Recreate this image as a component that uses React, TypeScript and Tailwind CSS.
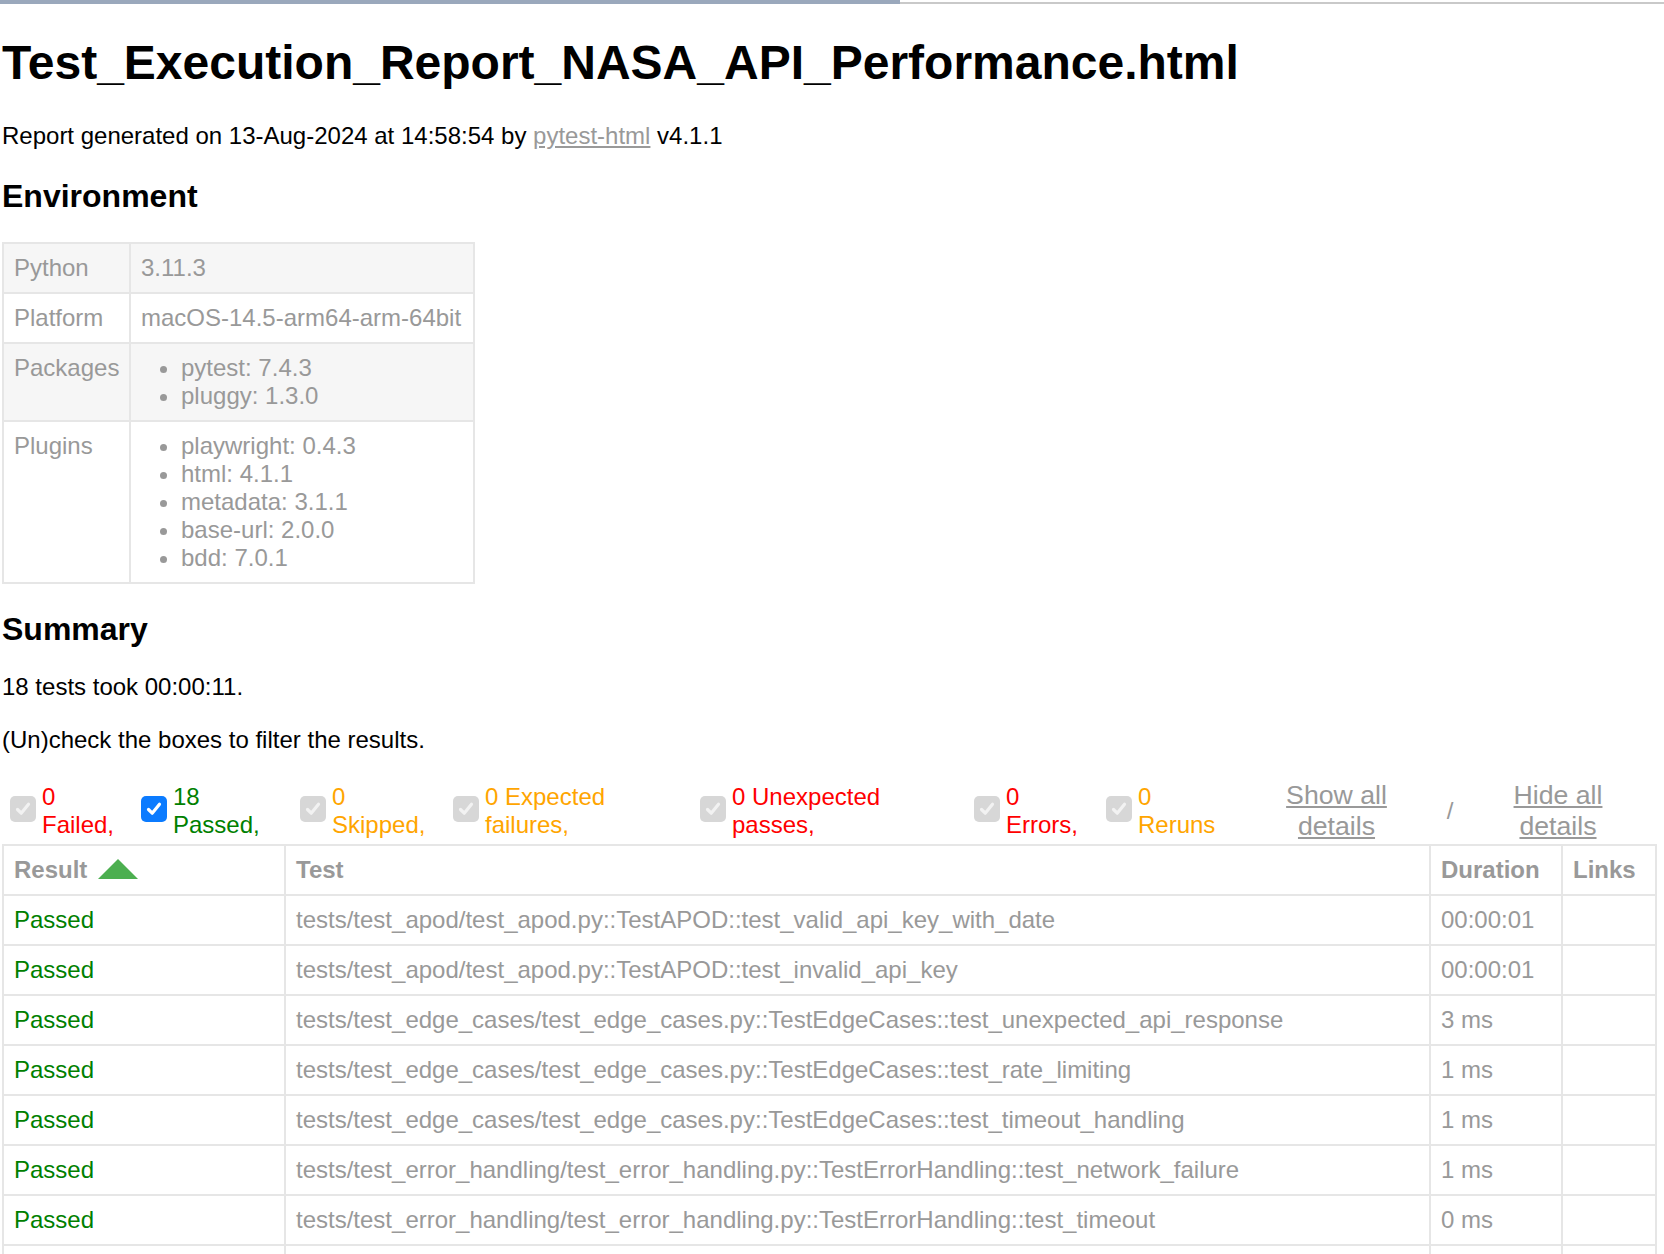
import React from "react";

function Check({ on }: { on?: boolean }) {
  return (
    <span
      className={
        on
          ? "mb-[4px] ml-[8px] mr-[6px] flex h-[26px] w-[26px] shrink-0 items-center justify-center rounded-[5px] bg-[#0b7bff]"
          : "mb-[4px] ml-[8px] mr-[6px] flex h-[26px] w-[26px] shrink-0 items-center justify-center rounded-[5px] bg-[#d7d7d7]"
      }
    >
      <svg width="20" height="20" viewBox="0 0 20 20">
        <path
          d="M4.5 10.5 L8.2 14.2 L15.5 5.2"
          fill="none"
          stroke={on ? "#ffffff" : "#f2f2f2"}
          strokeWidth="3.2"
          strokeLinecap="round"
          strokeLinejoin="round"
        />
      </svg>
    </span>
  );
}

const filters = [
  { on: false, l1: "0", l2: "Failed,", cls: "w-[91px] text-[#ff0000]" },
  { on: true, l1: "18", l2: "Passed,", cls: "w-[119px] text-[#008000]" },
  { on: false, l1: "0", l2: "Skipped,", cls: "w-[113px] text-[#ffa500]" },
  { on: false, l1: "0 Expected", l2: "failures,", cls: "w-[207px] text-[#ffa500]" },
  { on: false, l1: "0 Unexpected", l2: "passes,", cls: "w-[234px] text-[#ff0000]" },
  { on: false, l1: "0", l2: "Errors,", cls: "w-[92px] text-[#ff0000]" },
  { on: false, l1: "0", l2: "Reruns", cls: "w-[95px] text-[#ffa500]" },
];

const rows = [
  ["tests/test_apod/test_apod.py::TestAPOD::test_valid_api_key_with_date", "00:00:01"],
  ["tests/test_apod/test_apod.py::TestAPOD::test_invalid_api_key", "00:00:01"],
  ["tests/test_edge_cases/test_edge_cases.py::TestEdgeCases::test_unexpected_api_response", "3 ms"],
  ["tests/test_edge_cases/test_edge_cases.py::TestEdgeCases::test_rate_limiting", "1 ms"],
  ["tests/test_edge_cases/test_edge_cases.py::TestEdgeCases::test_timeout_handling", "1 ms"],
  ["tests/test_error_handling/test_error_handling.py::TestErrorHandling::test_network_failure", "1 ms"],
  ["tests/test_error_handling/test_error_handling.py::TestErrorHandling::test_timeout", "0 ms"],
];

const envTd = "border-[2px] border-[#e6e6e6] p-[10px] align-top";
const resCell = "border-[2px] border-[#e6e6e6] p-[10px] text-left align-top";

export default function App() {
  return (
    <div className="relative h-[1254px] w-[1664px] overflow-hidden bg-white font-['Liberation_Sans',Arial,Helvetica,sans-serif] text-[24px] leading-[27.6px] text-[#999999]">
      <div className="flex h-[4px]">
        <div className="h-[4px] w-[900px] bg-[#9aa8bc]" />
        <div className="mt-[2px] h-[2px] flex-1 bg-[#c9c9c9]" />
      </div>
      <div className="pl-[2px]">
        <h1 className="mt-[31px] text-[48px] font-bold leading-[55.2px] text-black">
          Test_Execution_Report_NASA_API_Performance.html
        </h1>
        <p className="mt-[32px] text-black">
          Report generated on 13-Aug-2024 at 14:58:54 by{" "}
          <a className="text-[#999999] underline">pytest-html</a> v4.1.1
        </p>
        <h2 className="mt-[28px] text-[32px] font-bold leading-[36.8px] text-black">Environment</h2>
        <table className="mt-[27px] w-[471px] table-fixed border-collapse leading-[28px]">
          <colgroup>
            <col className="w-[127px]" />
            <col className="w-[344px]" />
          </colgroup>
          <tbody>
            <tr className="bg-[#f6f6f6]">
              <td className={envTd}>Python</td>
              <td className={envTd}>3.11.3</td>
            </tr>
            <tr>
              <td className={envTd}>Platform</td>
              <td className={envTd + " whitespace-nowrap"}>macOS-14.5-arm64-arm-64bit</td>
            </tr>
            <tr className="bg-[#f6f6f6]">
              <td className={envTd}>Packages</td>
              <td className={envTd}>
                <ul className="list-disc pl-[40px]">
                  <li>pytest: 7.4.3</li>
                  <li>pluggy: 1.3.0</li>
                </ul>
              </td>
            </tr>
            <tr>
              <td className={envTd}>Plugins</td>
              <td className={envTd}>
                <ul className="list-disc pl-[40px]">
                  <li>playwright: 0.4.3</li>
                  <li>html: 4.1.1</li>
                  <li>metadata: 3.1.1</li>
                  <li>base-url: 2.0.0</li>
                  <li>bdd: 7.0.1</li>
                </ul>
              </td>
            </tr>
          </tbody>
        </table>

        <h2 className="mt-[27px] text-[32px] font-bold leading-[36.8px] text-black">Summary</h2>
        <p className="mt-[26px] text-black">18 tests took 00:00:11.</p>
        <p className="mt-[25px] text-black">(Un)check the boxes to filter the results.</p>

        <div className="mt-[25px] flex h-[65px] items-center">
          <div className="flex h-full items-center">
            {filters.map((f, i) => (
              <div key={i} className="flex items-center">
                <Check on={f.on} />
                <span className={f.cls}>
                  {f.l1}
                  <br />
                  {f.l2}
                </span>
              </div>
            ))}
          </div>
          <div className="flex h-full items-center">
            <button className="w-[207px] px-[12px] py-[2px] text-center text-[26.67px] leading-[30.67px] text-[#999999] underline">
              Show all
              <br />
              details
            </button>
            <span className="w-[20px] text-center">/</span>
            <button className="w-[196px] px-[12px] py-[2px] text-center text-[26.67px] leading-[30.67px] text-[#999999] underline">
              Hide all
              <br />
              details
            </button>
          </div>
        </div>

        <table className="w-[1653px] table-fixed border-collapse border-[2px] border-[#e6e6e6] leading-[28px]">
          <colgroup>
            <col className="w-[282px]" />
            <col className="w-[1145px]" />
            <col className="w-[132px]" />
            <col className="w-[94px]" />
          </colgroup>
          <thead>
            <tr>
              <th className={resCell + " font-bold"}>
                <div className="flex items-center">
                  <span>Result</span>
                  <span className="ml-[11px] mb-[2px] h-0 w-0 border-x-[20px] border-b-[20px] border-x-transparent border-b-[#4caf50]" />
                </div>
              </th>
              <th className={resCell + " font-bold"}>Test</th>
              <th className={resCell + " font-bold"}>Duration</th>
              <th className={resCell + " font-bold"}>Links</th>
            </tr>
          </thead>
          <tbody>
            {rows.map((r, i) => (
              <tr key={i}>
                <td className={resCell + " text-[#008000]"}>Passed</td>
                <td className={resCell + " whitespace-nowrap"}>{r[0]}</td>
                <td className={resCell}>{r[1]}</td>
                <td className={resCell}></td>
              </tr>
            ))}
            <tr className="h-[50px]">
              <td className={resCell}></td>
              <td className={resCell}></td>
              <td className={resCell}></td>
              <td className={resCell}></td>
            </tr>
          </tbody>
        </table>
      </div>
    </div>
  );
}
